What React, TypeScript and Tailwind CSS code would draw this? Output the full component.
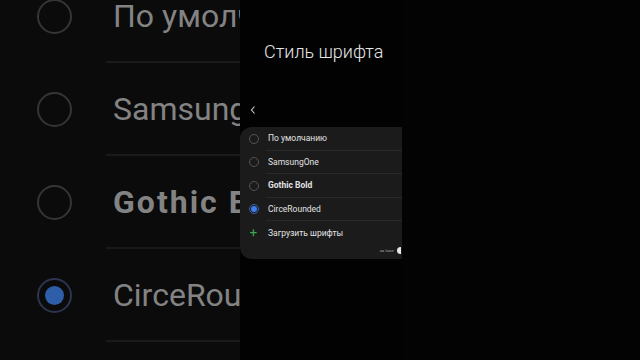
const bigRows = [
  { label: "По умолчанию", bold: false, checked: false },
  { label: "SamsungOne", bold: false, checked: false },
  { label: "Gothic Bold", bold: true, checked: false },
  { label: "CirceRounded", bold: false, checked: true },
];

function BigRadio({ checked }: { checked: boolean }) {
  if (checked) {
    return (
      <div className="flex h-[35px] w-[35px] items-center justify-center rounded-full border-2 border-[#2c3450]">
        <div className="h-[19px] w-[19px] rounded-full bg-[#2f5ea8]" />
      </div>
    );
  }
  return <div className="h-[35px] w-[35px] rounded-full border-2 border-[#353535]" />;
}

function SmallRadio({ checked }: { checked: boolean }) {
  if (checked) {
    return (
      <div className="flex h-[10px] w-[10px] items-center justify-center rounded-full border border-[#3b5fa8]">
        <div className="h-[6px] w-[6px] rounded-full bg-[#3d7df0]" />
      </div>
    );
  }
  return <div className="h-[10px] w-[10px] rounded-full border border-[#555555]" />;
}

export default function App() {
  return (
    <div
      className="flex h-[360px] w-[640px] overflow-hidden bg-[#050505]"
      style={{ fontFamily: "Roboto, 'Noto Sans', sans-serif" }}
    >
      {/* blurred zoomed background */}
      <div className="w-[240px] shrink-0 overflow-hidden bg-[#0b0b0b]">
        <div className="-mt-[30px] flex flex-col">
          {bigRows.map((r) => (
            <div key={r.label} className="flex h-[93px] items-center">
              <div className="flex w-[106px] shrink-0 justify-center pl-[4px] pr-[2px]">
                <BigRadio checked={r.checked} />
              </div>
              <div className="flex h-full min-w-0 flex-1 items-center overflow-hidden border-b-2 border-[#1a1a1a]">
                <span
                  className={`whitespace-nowrap pl-[7px] text-[32px] text-[#838383] ${
                    r.bold ? "font-bold tracking-[2px]" : "font-normal"
                  }`}
                >
                  {r.label}
                </span>
              </div>
            </div>
          ))}
        </div>
      </div>

      {/* phone screen */}
      <div className="flex w-[162px] shrink-0 flex-col bg-[#020202]">
        <div className="pt-[40px] pl-[24px] text-[18px] font-light leading-[24px] text-[#e6e6e6] whitespace-nowrap">
          Стиль шрифта
        </div>
        <div className="mt-[36px] flex h-[20px] items-center pl-[10px]">
          <svg width="6" height="10" viewBox="0 0 6 10" fill="none">
            <path d="M4.5 1.5L1.5 5L4.5 8.5" stroke="#cfcfcf" strokeWidth="1.1" />
          </svg>
        </div>
        <div className="mt-[7px] rounded-l-xl bg-[#1b1b1b] pb-[2px]">
          {bigRows.map((r) => (
            <div key={r.label} className="flex h-[23.5px] items-center">
              <div className="flex w-[26px] shrink-0 justify-center pl-[1px]">
                <SmallRadio checked={r.checked} />
              </div>
              <div className="flex h-full flex-1 items-center border-b border-[#2a2a2a]">
                <span
                  className={`pl-[2px] text-[8.5px] leading-[10px] text-[#e2e2e2] ${r.bold ? "font-bold" : ""}`}
                >
                  {r.label}
                </span>
              </div>
            </div>
          ))}
          <div className="flex h-[23.5px] items-center">
            <div className="flex w-[26px] shrink-0 justify-center pl-[1px] text-[13px] leading-none text-[#3da84e]">
              +
            </div>
            <span className="pl-[2px] text-[8.5px] leading-[10px] text-[#e2e2e2]">Загрузить шрифты</span>
          </div>
          <div className="flex h-[12px] items-center justify-end gap-[3px] pr-[1px]">
            <span className="text-[4px] leading-[5px] text-[#9a9a9a]">ив base</span>
            <div className="h-[7px] w-[4px] rounded-l-full bg-[#e6e6e6]" />
          </div>
        </div>
      </div>

      <div className="flex-1 bg-[#030303]" />
    </div>
  );
}
